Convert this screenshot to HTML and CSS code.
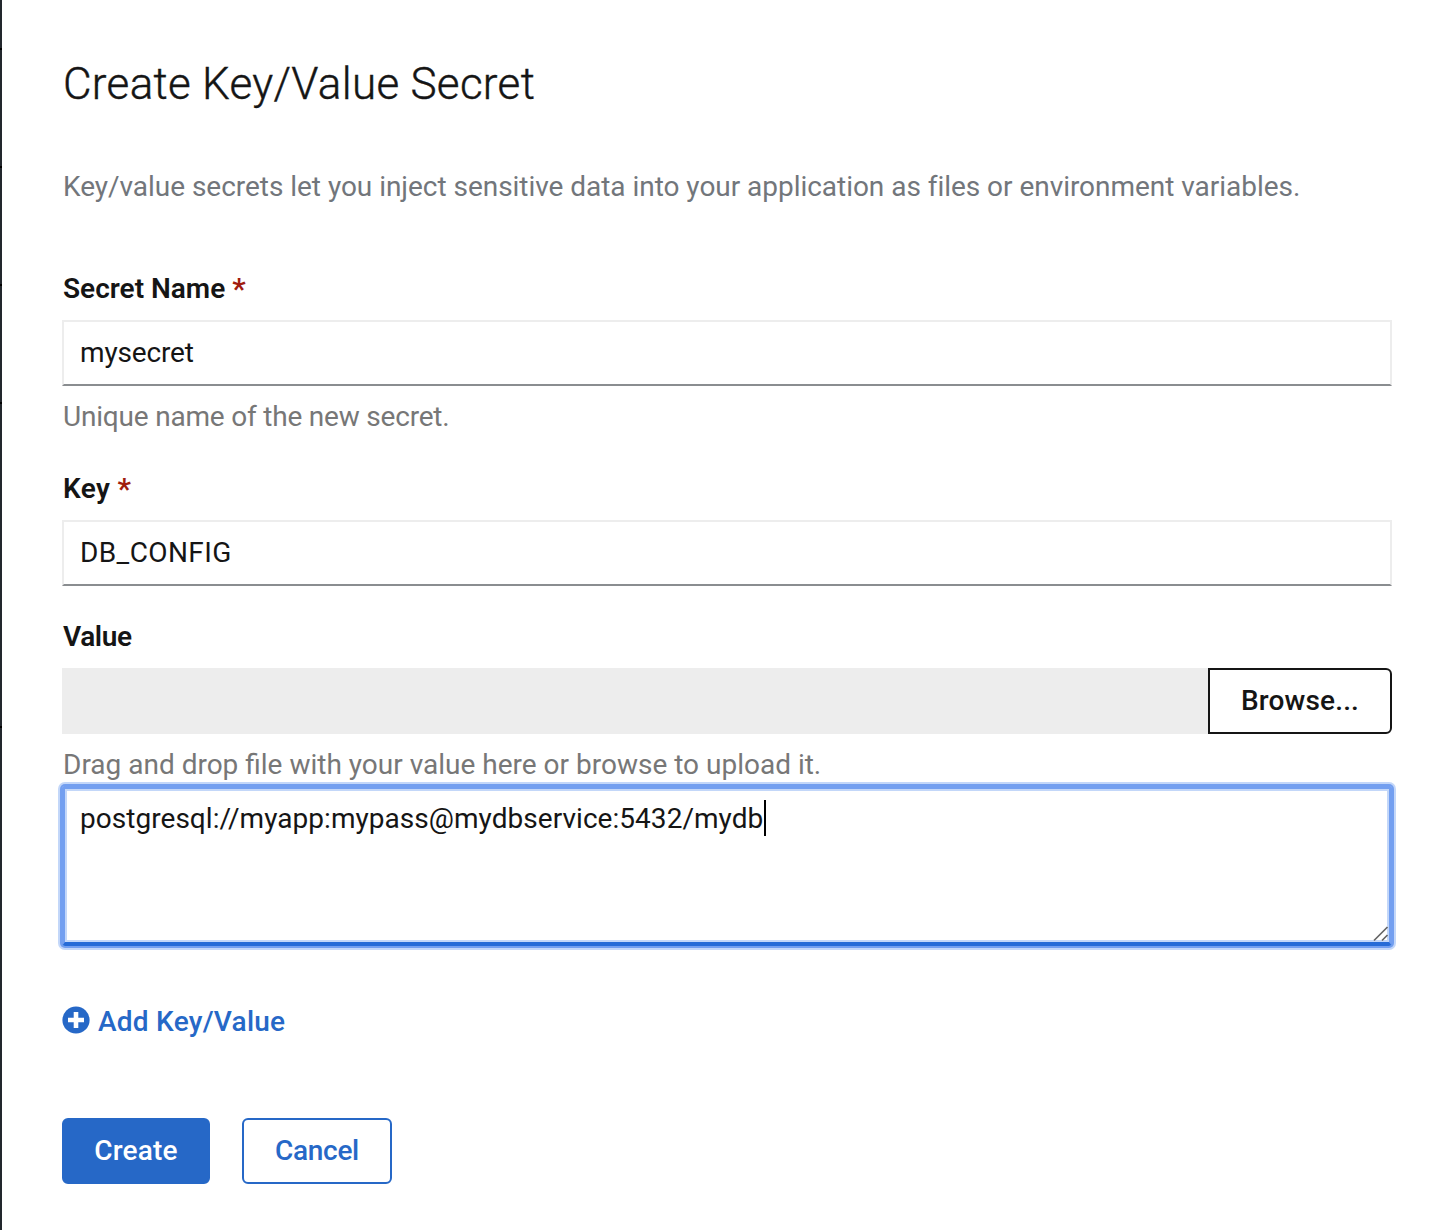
FILE: index.html
```
<!DOCTYPE html>
<html lang="en">
<head>
<meta charset="utf-8">
<title>Create Key/Value Secret</title>
<link rel="stylesheet" href="styles.css">
</head>
<body>
<div class="app">
  <aside class="nav-edge"><i></i><i></i><i></i><i></i><i class="wide"></i></aside>
  <main class="page">
    <h1 class="title">Create Key/Value Secret</h1>
    <p class="intro">Key/value secrets let you inject sensitive data into your application as files or environment variables.</p>
    <form class="form">
      <div class="group group-name">
        <label class="label" for="name"><span class="label-name">Secret Name</span><span class="required">*</span></label>
        <input class="input input-name" id="name" type="text" value="mysecret">
        <p class="help help-name">Unique name of the new secret.</p>
      </div>
      <div class="group group-key">
        <label class="label" for="key"><span class="label-key">Key</span><span class="required">*</span></label>
        <input class="input input-key" id="key" type="text" value="DB_CONFIG">
      </div>
      <div class="group">
        <label class="label"><span class="label-value">Value</span></label>
        <div class="upload">
          <div class="upload-name"></div>
          <button class="browse" type="button">Browse...</button>
        </div>
        <p class="help">Drag and drop file with your value here or browse to upload it.</p>
        <div class="textarea">
          <span>postgresql://myapp:mypass@mydbservice:5432/mydb</span><i class="caret"></i>
          <svg class="grip" width="16" height="16" viewBox="0 0 16 16"><path d="M1 14.500 14.500 1M9 14.500l5.500-5.500" stroke="#666" stroke-width="1.7" fill="none"/></svg>
        </div>
      </div>
      <a class="add">
        <svg width="28" height="28" viewBox="0 0 28 28"><circle cx="14" cy="14" r="13.6" fill="#2668c7"/><path d="M14 6v16M6 14h16" stroke="#fff" stroke-width="4.600"/></svg>
        <span class="add-text">Add Key/Value</span>
      </a>
      <div class="actions">
        <button class="btn btn-primary" type="button">Create</button>
        <button class="btn btn-secondary" type="button">Cancel</button>
      </div>
    </form>
  </main>
</div>
</body>
</html>
```
FILE: styles.css
```
* { box-sizing: border-box; }
body { margin: 0; background: #fff; color: #151515; font: 400 28px/42px Roboto, "Liberation Sans", sans-serif; }
h1, p { margin: 0; }
.app { display: flex; height: 1230px; overflow: hidden; }
.nav-edge { flex: none; width: 2px; padding-top: 48px; background: #22272d; display: flex; flex-direction: column; gap: 116px; }
.nav-edge i { height: 2px; background: #000; }
.nav-edge .wide { margin-top: 206px; }
.page { flex: 1; padding: 58px 64px 0 60px; }
.title { font-weight: 300; font-size: 44px; line-height: 52px; letter-spacing: .3px; -webkit-text-stroke: .4px #151515; padding-left: 1px; }
.intro { margin-top: 56px; color: #72767b; letter-spacing: -.035px; white-space: nowrap; padding-left: 1px; }
.form { margin-top: 60px; }
.group-name, .group-key { margin-bottom: 30px; }
.label { display: flex; gap: 7px; margin-bottom: 10px; padding-left: 1px; font-weight: 600; }
.label-key { letter-spacing: .4px; }
.label-value { letter-spacing: -.4px; }
.required { color: #a01c0f; font-size: 30px; }
.input { display: block; width: 100%; height: 66px; padding: 0 16px 2px; border: 2px solid #ededed; border-bottom-color: #8a8d90; border-radius: 0; outline: 0; background: #fff; color: #151515; font: inherit; }
.input-name { letter-spacing: -.15px; }
.input-key { letter-spacing: .4px; }
.help { margin-top: 10px; padding-left: 1px; color: #777; }
.help-name { letter-spacing: -.2px; }
.upload { display: flex; height: 66px; }
.upload-name { flex: 1; background: #ededed; }
.browse { width: 184px; padding: 0; border: 2px solid #151515; border-radius: 0 6px 6px 0; background: #fff; color: #151515; font: inherit; font-weight: 500; letter-spacing: .15px; }
.textarea { position: relative; display: flex; align-items: flex-start; height: 160px; padding: 9px 15px; border: 3px solid #739ff0; border-bottom: 4px solid #266bd7; border-radius: 3px; letter-spacing: .04px; box-shadow: 0 0 0 2px #739ff0, 0 0 0 4px #c3d7f9, inset 0 0 0 2px #c3d7f9; }
.caret { width: 2px; height: 36px; margin: 2px 0 0 1px; background: #000; }
.grip { position: absolute; right: 0; bottom: 0; }
.add { display: flex; align-items: center; gap: 8px; margin-top: 53px; color: #2668c7; font-weight: 500; letter-spacing: .25px; }
.add-text { padding-top: 2px; margin-bottom: -2px; }
.actions { display: flex; gap: 32px; margin-top: 77px; }
.btn { height: 66px; padding: 0; border: 2px solid #2668c7; border-radius: 6px; font: inherit; font-weight: 500; }
.btn-primary { width: 148px; background: #2668c7; color: #fff; letter-spacing: .2px; }
.btn-secondary { width: 150px; background: #fff; color: #2668c7; letter-spacing: -.3px; }
```
